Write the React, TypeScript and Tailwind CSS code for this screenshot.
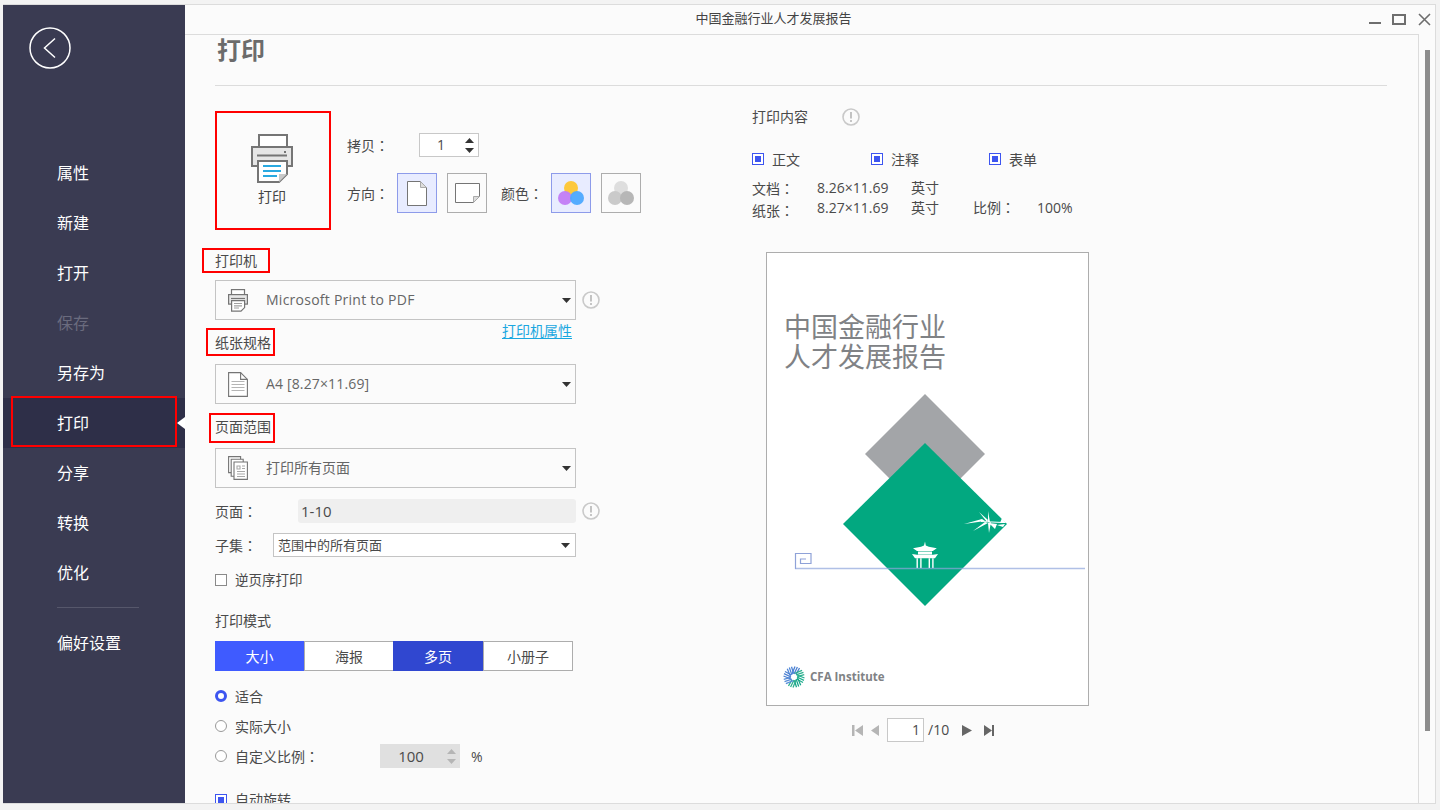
import type { ReactNode } from "react"

const navItems = ["属性", "新建", "打开", "保存", "另存为", "打印", "分享", "转换", "优化"]

function Caret({ className = "fill-[#333]" }: { className?: string }) {
  return (
    <svg width="9" height="5" viewBox="0 0 9 5" className={className}>
      <path d="M0 0h9L4.5 5z" />
    </svg>
  )
}

// the reference centres the full-width colon, which the TC cut of the font does
function Colon() {
  return <span className="leading-none [font-family:'Noto_Sans_CJK_TC',sans-serif]">：</span>
}

function InfoIcon() {
  return (
    <svg width="18" height="18" viewBox="0 0 18 18" className="shrink-0">
      <circle cx="9" cy="9" r="8" fill="none" stroke="#c9c9c9" strokeWidth="1.6" />
      <path d="M9 4v6.5" stroke="#b5b5b5" strokeWidth="1.6" />
      <circle cx="9" cy="13" r="1" fill="#b5b5b5" />
    </svg>
  )
}

function BigPrinter() {
  return (
    <svg width="42" height="49" viewBox="0 0 42 49">
      <rect x="8" y="1" width="28" height="14" fill="#fff" stroke="#757575" strokeWidth="2" />
      <rect x="1" y="13" width="40" height="19" fill="#e6e6e6" stroke="#757575" strokeWidth="2" />
      <path d="M6 21.5h30" stroke="#757575" strokeWidth="2" />
      <rect x="33" y="17" width="2" height="2" fill="#757575" />
      <path d="M7 27h29v13l-8 8H7z" fill="#fff" stroke="#757575" strokeWidth="2" />
      <path d="M36 40h-8v8z" fill="#c9c9c9" />
      <path d="M12 32h18M12 37h18M12 42h14" stroke="#29a9e0" strokeWidth="2" />
    </svg>
  )
}

function SmallPrinter() {
  return (
    <svg width="20" height="23" viewBox="0 0 20 23" fill="none" stroke="#757575" strokeWidth="1.2">
      <rect x="3.5" y="0.6" width="13" height="6" fill="#fff" />
      <rect x="0.6" y="5.6" width="18.8" height="9.5" fill="#e8e8e8" />
      <path d="M3 9.5h14" />
      <path d="M3.6 11.6h13v7l-3.6 3.6H3.6z" fill="#fff" />
      <path d="M6 14.5h8M6 16.8h8M6 19h5" stroke="#a0a0a0" />
    </svg>
  )
}

function SmallDoc() {
  return (
    <svg width="20" height="25" viewBox="0 0 20 25" fill="none" stroke="#757575" strokeWidth="1.1">
      <path d="M0.6 0.6h12l6.8 6.8v17H0.6z" fill="#fff" />
      <path d="M12.6 0.6v6.8h6.8" />
      <path d="M3.5 9.5h13M3.5 12.5h13M3.5 15.5h13M3.5 18.5h13" stroke="#b5b5b5" />
    </svg>
  )
}

function SmallPages() {
  return (
    <svg width="20" height="24" viewBox="0 0 20 24" fill="none" stroke="#757575" strokeWidth="1.1">
      <path d="M0.6 0.6h12v16H0.6z" fill="#fff" />
      <path d="M3.2 3.2h12v17H3.2z" fill="#fff" />
      <path d="M6 6h13.4v17.4H6z" fill="#fff" />
      <path d="M9 10h3v3H9zM14 10h3M14 12.5h3M9 15.5h8M9 18h8M9 20.5h8" stroke="#a8a8a8" />
    </svg>
  )
}

function Annotated({ children, className }: { children: ReactNode; className: string }) {
  return (
    <div className="relative w-fit h-[18px] leading-[18px]">
      {children}
      <span className={`absolute border-2 border-[#f00] ${className}`} />
    </div>
  )
}

function SelectBox({ icon, children }: { icon: ReactNode; children: ReactNode }) {
  return (
    <div className="flex items-center h-10 w-[361px] shrink-0 bg-[#fbfbfb] border border-[#c4c4c4] pl-3 pr-1">
      <div className="w-[38px] shrink-0 flex items-center">{icon}</div>
      <div className="flex-1 text-[#666]">{children}</div>
      <Caret />
    </div>
  )
}

function OptionBox({ active, children }: { active?: boolean; children: ReactNode }) {
  return (
    <div
      className={`w-10 h-10 flex items-center justify-center border ${
        active ? "bg-[#e8ecff] border-[#8d9bea]" : "border-[#adadad]"
      }`}
    >
      {children}
    </div>
  )
}

function CheckMark() {
  return (
    <span className="w-3 h-3 shrink-0 border border-[#3d55f0] p-[2px] bg-white">
      <span className="block w-full h-full bg-[#3d55f0]" />
    </span>
  )
}

function Radio({ checked }: { checked?: boolean }) {
  return checked ? (
    <span className="w-3 h-3 shrink-0 rounded-full border-[3.5px] border-[#3d55f0] bg-white" />
  ) : (
    <span className="w-3 h-3 shrink-0 rounded-full border border-[#999] bg-white" />
  )
}

function CoverArt() {
  const cx = 158
  return (
    <svg width="321" height="220" viewBox="0 0 321 220" className="block mt-[18px]">
      <path d="M158 4l60 60-60 60-60-60z" fill="#a3a5a8" />
      <path d="M158 53l82 81-82 82-82-82z" fill="#02a880" />
      <g fill="#fff">
        <path d="M197 134l18-5 3 2zM206 141l12-9 3 1zM212 122l9 8-1 2zM221 121l2 11-2 0zM222 143l-1-10 3-1zM228 139l-6-6 8 1zM239 133l-4-5-2 5zM236 137l-6-2 8-1z" />
        <path d="M214 131l22 1v1l-22-1z" />
      </g>
      <g fill="#fff">
        <path d={`M${cx} 151.5l.8 4 3 1.2 8 1.6-4 2.6H${cx - 8}l-4-2.6 8-1.6 3-1.2z`} />
        <path d="M151 161.5h14v3h-14z" />
        <path d="M145 164l5 .8h16l5-.8-3 4.2h-20z" />
        <path d="M149.5 168.2h1.4V178h-1.4zM153.2 168.2h1.4V178h-1.4zM161.6 168.2h1.4V178h-1.4zM165.2 168.2h1.4V178h-1.4z" />
      </g>
      <path d="M28.5 179V163.5H44V173.5H33.5V169H39" fill="none" stroke="#8fa2d8" strokeWidth="1.2" />
      <path d="M28 178.5H318" stroke="#8fa5dc" strokeOpacity="0.7" strokeWidth="1.4" />
    </svg>
  )
}

function CfaLogo() {
  const colors = ["#4a7fd0", "#2fb08f", "#1fae8e", "#19a58a", "#2fb08f", "#5a8fd8", "#4a7fd0", "#4f86d6"]
  return (
    <svg width="22" height="22" viewBox="-11 -11 22 22" className="shrink-0">
      {colors.map((c, i) => (
        <g key={i} transform={`rotate(${i * 45})`} stroke={c} strokeWidth="1.3">
          <path d="M-2 -3L1 -10.5M0 -3L3.4 -10M2 -2.6L5.5 -9" />
        </g>
      ))}
    </svg>
  )
}

export default function App() {
  return (
    <div className="w-[1440px] h-[810px] overflow-hidden bg-[#f3f3f3] pl-[3px] pt-1 pr-1 pb-[6px] text-sm text-[#4a4a4a] [font-family:'Open_Sans','Noto_Sans_CJK_SC',sans-serif]">
      <div className="flex h-full bg-[#fbfbfb] border-r border-b border-t border-[#dcdcdc]">
        {/* Sidebar */}
        <aside className="w-[182px] shrink-0 bg-[#3a3b52] text-white text-base">
          <div className="pl-[26px] pt-[22px] h-[143px]">
            <svg width="42" height="42" viewBox="0 0 42 42" fill="none" stroke="#fff">
              <circle cx="21" cy="21" r="20" strokeWidth="1.5" />
              <path d="M26 11.5L15.5 21 26 30.5" strokeWidth="1.5" />
            </svg>
          </div>
          {navItems.map((name) => (
            <div
              key={name}
              className={`relative flex items-center h-[50px] pl-[54px] ${
                name === "打印" ? "bg-[#2e2f48]" : ""
              } ${name === "保存" ? "text-[#6a6b7e]" : ""}`}
            >
              {name}
              {name === "打印" && (
                <>
                  <span className="absolute left-2 right-2 top-[-2px] bottom-[1px] border-2 border-[#f00]" />
                  <span className="absolute right-0 top-[19px] w-0 h-0 border-y-[6px] border-y-transparent border-r-[8px] border-r-white" />
                </>
              )}
            </div>
          ))}
          <div className="ml-[54px] w-[82px] mt-[9px] border-t border-[#56576b]" />
          <div className="flex items-center h-[50px] pl-[54px] mt-[10px]">偏好设置</div>
        </aside>

        <div className="flex-1 min-w-0 flex flex-col">
          {/* Title bar */}
          <header className="flex h-[29px] shrink-0 items-center">
            <div className="w-[1177px] text-center text-[13px] text-[#444] pb-[2px]">中国金融行业人才发展报告</div>
            <div className="flex items-center gap-[11px] pl-[7px]">
              <svg width="12" height="12" viewBox="0 0 12 12" fill="#6e6e6e">
                <rect x="0" y="8" width="12" height="2" />
              </svg>
              <svg width="14" height="11" viewBox="0 0 14 11" fill="none" stroke="#6e6e6e" strokeWidth="2">
                <rect x="1" y="1" width="12" height="9" />
              </svg>
              <svg width="13" height="13" viewBox="0 0 13 13" stroke="#6e6e6e" strokeWidth="1.6" className="ml-[1px]">
                <path d="M1 1l11 11M12 1L1 12" />
              </svg>
            </div>
          </header>

          <div className="flex-1 min-h-0 flex">
            {/* Content */}
            <main className="flex-1 min-w-0 overflow-hidden border-t border-r border-[#dcdcdc] pl-[30px] pr-[31px]">
              <div className="h-[50px] border-b border-[#dcdcdc] box-content">
                <h1 className="text-2xl leading-[30px] font-bold text-[#6b6b6b] pl-[2px]">打印</h1>
              </div>

              <div className="flex pt-[25px]">
                {/* Left column */}
                <div className="w-[385px] shrink-0">
                  <div className="flex gap-4">
                    <div className="w-[116px] h-[119px] shrink-0 border-2 border-[#f00] flex flex-col items-center pt-[21px] pr-[2px]">
                      <BigPrinter />
                      <span className="mt-[5px] leading-[18px] text-[#444]">打印</span>
                    </div>
                    <div className="pt-[22px]">
                      <div className="flex items-center h-6">
                        <span className="w-[72px] pt-[2px]">拷贝<Colon /></span>
                        <div className="flex items-center w-[60px] h-6 border border-[#c8c8c8] bg-white">
                          <span className="flex-1 text-center pr-[3px]">1</span>
                          <div className="flex flex-col gap-[5px] pr-[4px]">
                            <Caret className="fill-[#333] rotate-180" />
                            <Caret />
                          </div>
                        </div>
                      </div>
                      <div className="flex items-center mt-4">
                        <span className="w-[50px] pt-[2px]">方向<Colon /></span>
                        <OptionBox active>
                          <svg width="20" height="25" viewBox="0 0 20 25" fill="none" stroke="#757575" strokeWidth="1">
                            <path d="M.5.5h13l6 6v18H.5z" fill="#fff" />
                            <path d="M13.5.5v6h6" fill="#ddd" stroke="#aaa" />
                          </svg>
                        </OptionBox>
                        <div className="ml-[10px]">
                          <OptionBox>
                            <svg width="25" height="20" viewBox="0 0 25 20" fill="none" stroke="#757575" strokeWidth="1">
                              <path d="M.5.5h24v13l-6 6H.5z" fill="#fff" />
                              <path d="M24.5 13.5h-6v6" fill="#ddd" stroke="#aaa" />
                            </svg>
                          </OptionBox>
                        </div>
                        <span className="w-[50px] ml-[14px] pt-[2px]">颜色<Colon /></span>
                        <OptionBox active>
                          <svg width="26" height="24" viewBox="0 0 26 24">
                            <circle cx="13" cy="7" r="7" fill="#fdc83c" />
                            <circle cx="7" cy="17" r="7" fill="#c27cf5" fillOpacity="0.95" />
                            <circle cx="19" cy="17" r="7" fill="#4da9ff" fillOpacity="0.95" />
                          </svg>
                        </OptionBox>
                        <div className="ml-[10px]">
                          <OptionBox>
                            <svg width="26" height="24" viewBox="0 0 26 24">
                              <circle cx="13" cy="7" r="7" fill="#dedede" />
                              <circle cx="7" cy="17" r="7" fill="#cacaca" />
                              <circle cx="19" cy="17" r="7" fill="#b7b7b7" />
                            </svg>
                          </OptionBox>
                        </div>
                      </div>
                    </div>
                  </div>

                  <div className="mt-[22px] mb-[10px]">
                    <Annotated className="-left-[13px] -right-[13px] -top-[4px] -bottom-[3px]">打印机</Annotated>
                  </div>
                  <div className="flex items-center gap-[6px]">
                    <SelectBox icon={<SmallPrinter />}>
                      <span className="tracking-[0.25px]">Microsoft Print to PDF</span>
                    </SelectBox>
                    <InfoIcon />
                  </div>

                  <div className="flex justify-between items-start w-[357px] h-11">
                    <div className="mt-[14px]">
                      <Annotated className="-left-[9px] -right-[4px] -top-[6px] -bottom-[4px]">纸张规格</Annotated>
                    </div>
                    <span className="mt-[2px] leading-[18px] text-[#1aa7e0] underline underline-offset-2">打印机属性</span>
                  </div>
                  <SelectBox icon={<SmallDoc />}>
                    <span className="tracking-[0.15px]">A4 [8.27×11.69]</span>
                  </SelectBox>

                  <div className="mt-[14px] mb-3">
                    <Annotated className="-left-[6px] -right-[4px] -top-[5px] -bottom-[7px]">页面范围</Annotated>
                  </div>
                  <SelectBox icon={<SmallPages />}>打印所有页面</SelectBox>

                  <div className="flex items-center mt-[11px]">
                    <span className="w-[83px] pt-[2px]">页面<Colon /></span>
                    <div className="w-[278px] h-6 bg-[#efefef] rounded-[3px] flex items-center pl-[3px] pt-[2px] text-[15px]">1-10</div>
                    <div className="ml-[6px]">
                      <InfoIcon />
                    </div>
                  </div>

                  <div className="flex items-center mt-[10px]">
                    <span className="w-[58px] pt-[2px]">子集<Colon /></span>
                    <div className="w-[303px] h-6 bg-white border border-[#c4c4c4] flex items-center justify-between pl-1 pr-[5px] text-[13px]">
                      范围中的所有页面
                      <Caret />
                    </div>
                  </div>

                  <div className="flex items-center gap-2 h-[18px] mt-[14px]">
                    <span className="w-3 h-3 border border-[#8a8a8a] bg-white" />
                    <span className="text-[13.5px] pt-px">逆页序打印</span>
                  </div>

                  <div className="h-[18px] leading-[18px] mt-[23px]">打印模式</div>

                  <div className="flex w-[358px] h-[30px] mt-[11px] border border-[#adadad] border-l-0 bg-white text-center leading-[28px]">
                    <div className="w-[89px] -my-px pt-px leading-[30px] bg-[#3f5bff] text-white">大小</div>
                    <div className="w-[89px] pt-px border-l border-[#adadad]">海报</div>
                    <div className="w-[90px] -my-px pt-px leading-[30px] bg-[#3047d0] text-white">多页</div>
                    <div className="flex-1 pt-px border-l border-[#adadad]">小册子</div>
                  </div>

                  <div className="flex items-center gap-2 h-5 mt-[15px]">
                    <Radio checked />
                    <span className="pt-px">适合</span>
                  </div>
                  <div className="flex items-center gap-2 h-5 mt-[10px]">
                    <Radio />
                    <span className="pt-px">实际大小</span>
                  </div>
                  <div className="flex items-center h-6 mt-2">
                    <Radio />
                    <span className="ml-2 w-[145px] pt-px">自定义比例<Colon /></span>
                    <div className="flex items-center w-20 h-6 bg-[#e0e0e0]">
                      <span className="flex-1 text-center pr-[5px] pt-px text-[15px]">100</span>
                      <div className="flex flex-col gap-[5px] pr-[4px]">
                        <Caret className="fill-[#b5b5b5] rotate-180" />
                        <Caret className="fill-[#b5b5b5]" />
                      </div>
                    </div>
                    <span className="ml-[11px] pt-px">%</span>
                  </div>

                  <div className="flex items-center gap-2 h-5 mt-[22px]">
                    <CheckMark />
                    <span>自动旋转</span>
                  </div>
                </div>

                {/* Right column */}
                <div className="ml-[152px] -mt-[3px]">
                  <div className="flex items-center h-[18px] leading-[18px]">
                    <span className="w-[90px]">打印内容</span>
                    <InfoIcon />
                  </div>
                  <div className="flex h-5 mt-[23px]">
                    <div className="flex items-center gap-2 w-[119px]"><CheckMark /><span className="pt-px">正文</span></div>
                    <div className="flex items-center gap-2 w-[118px]"><CheckMark /><span className="pt-px">注释</span></div>
                    <div className="flex items-center gap-2"><CheckMark /><span className="pt-px">表单</span></div>
                  </div>
                  <div className="grid grid-cols-[65px_94px_62px_64px_60px] mt-[9px] leading-5">
                    <span className="pt-px leading-[19px]">文档<Colon /></span>
                    <span>8.26×11.69</span>
                    <span>英寸</span>
                    <span />
                    <span />
                    <span className="pt-[3px]">纸张<Colon /></span>
                    <span>8.27×11.69</span>
                    <span>英寸</span>
                    <span>比例<Colon /></span>
                    <span>100%</span>
                  </div>

                  <div className="ml-[14px] mt-[31px] w-[323px] h-[454px] bg-white border border-[#adadad]">
                    <div className="pl-[17px] pt-[59px] text-[27px] leading-[30px] text-[#808285]">
                      <div>中国金融行业</div>
                      <div>人才发展报告</div>
                    </div>
                    <CoverArt />
                    <div className="flex items-center gap-[5px] pl-4 mt-[56px]">
                      <CfaLogo />
                      <span className="text-[11.5px] font-bold text-[#808285]">CFA Institute</span>
                    </div>
                  </div>

                  <div className="flex items-center ml-[100px] mt-3 h-6">
                    <svg width="28" height="11" viewBox="0 0 28 11" fill="#b5b5b5">
                      <path d="M0 0h2.5v11H0zM11 0v11L3 5.5zM27 0v11l-8-5.5z" />
                    </svg>
                    <div className="ml-[7px] w-[37px] h-6 bg-white border border-[#c8c8c8] text-right pr-[3px] leading-[22px]">1</div>
                    <span className="ml-1 w-[34px]">/10</span>
                    <svg width="32" height="11" viewBox="0 0 32 11" fill="#666">
                      <path d="M0 0l10 5.5L0 11zM22 0l8 5.5L22 11zM30 0h2v11h-2z" />
                    </svg>
                  </div>
                </div>
              </div>
            </main>

            {/* Scrollbar */}
            <div className="w-4 shrink-0 pt-4 pl-[6px]">
              <div className="w-[5px] h-[681px] bg-[#8c8c8c]" />
            </div>
          </div>
        </div>
      </div>
    </div>
  )
}
